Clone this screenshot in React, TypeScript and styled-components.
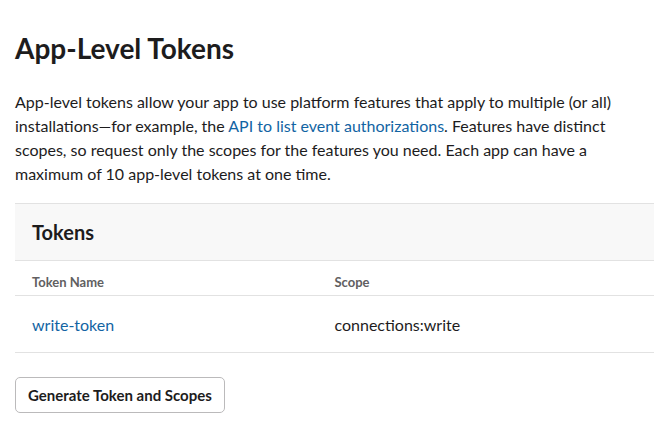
import React from "react";
import styled, { createGlobalStyle } from "styled-components";

const GlobalStyle = createGlobalStyle`
  body {
    margin: 0;
    background: #fff;
    font-family: Lato, "Noto Sans", sans-serif;
    color: #1d1c1d;
  }
`;

const tokens = [{ name: "write-token", scope: "connections:write" }];

const App = () => {
  return (
    <>
      <GlobalStyle />
      <Page>
        <Title>App-Level Tokens</Title>
        <Intro>
          App-level tokens allow your app to use platform features that apply
          to multiple (or all) installations—for example, the{" "}
          <Link href="#">API to list event authorizations</Link>. Features have
          distinct scopes, so request only the scopes for the features you
          need. Each app can have a maximum of 10 app-level tokens at one time.
        </Intro>
        <Panel>
          <PanelHeader>Tokens</PanelHeader>
          <HeadRow>
            <HeadCell>Token Name</HeadCell>
            <HeadCell>Scope</HeadCell>
          </HeadRow>
          {tokens.map((t) => (
            <Row key={t.name}>
              <Cell>
                <Link href="#">{t.name}</Link>
              </Cell>
              <Cell>{t.scope}</Cell>
            </Row>
          ))}
        </Panel>
        <GenerateButton type="button">Generate Token and Scopes</GenerateButton>
      </Page>
    </>
  );
};

export default App;

const Page = styled.div`
  padding: 29px 16px 0 15px;
`;

const Title = styled.h1`
  margin: 0;
  font-size: 28px;
  font-weight: 700;
  line-height: 38px;
`;

const Intro = styled.p`
  margin: 23px 0 0;
  font-size: 16px;
  line-height: 24px;
  max-width: 620px;
`;

const Link = styled.a`
  color: #1264a3;
  text-decoration: none;
`;

const Panel = styled.section`
  margin-top: 17px;
  border-top: 1px solid #e2e2e2;
`;

const PanelHeader = styled.h2`
  margin: 0;
  height: 56px;
  display: flex;
  align-items: center;
  padding: 0 17px;
  background: #f8f8f8;
  border-bottom: 1px solid #e2e2e2;
  font-size: 20px;
  font-weight: 700;
`;

const Row = styled.div`
  display: grid;
  grid-template-columns: 1fr 1fr;
  align-items: center;
  padding: 0 17px;
  height: 56px;
  border-bottom: 1px solid #e2e2e2;
`;

const HeadRow = styled(Row)`
  align-items: end;
  height: 35px;
  padding-bottom: 5px;
  box-sizing: border-box;
`;

const HeadCell = styled.div`
  font-size: 13px;
  line-height: 16px;
  font-weight: 700;
  color: #616061;
`;

const Cell = styled.div`
  font-size: 16px;
`;

const GenerateButton = styled.button`
  margin-top: 24px;
  height: 36px;
  padding: 0 12px;
  border: 1px solid #bbbabb;
  border-radius: 5px;
  background: #fff;
  font-family: Lato, "Noto Sans", sans-serif;
  font-size: 15px;
  font-weight: 700;
  color: #1d1c1d;
`;
